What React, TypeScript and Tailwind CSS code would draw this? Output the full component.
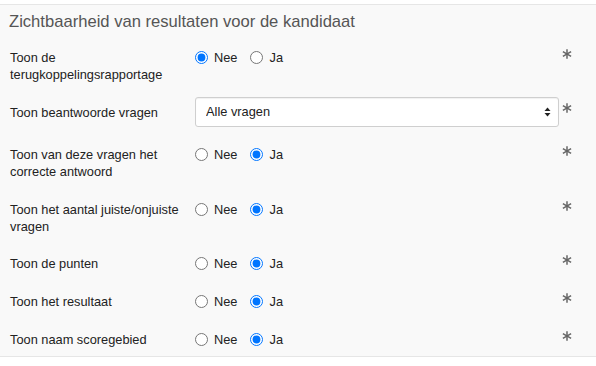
import { useState } from 'react';

type Row =
  | { kind: 'radio'; name: string; label: string; value: 'nee' | 'ja'; mt: string }
  | { kind: 'select'; name: string; label: string; mt: string };

const rows: Row[] = [
  { kind: 'radio', name: 'feedback', label: 'Toon de terugkoppelingsrapportage', value: 'nee', mt: 'mt-[17px]' },
  { kind: 'select', name: 'answered', label: 'Toon beantwoorde vragen', mt: 'mt-[14px]' },
  { kind: 'radio', name: 'correct', label: 'Toon van deze vragen het correcte antwoord', value: 'ja', mt: 'mt-[19px]' },
  { kind: 'radio', name: 'count', label: 'Toon het aantal juiste/onjuiste vragen', value: 'ja', mt: 'mt-[21px]' },
  { kind: 'radio', name: 'points', label: 'Toon de punten', value: 'ja', mt: 'mt-[20px]' },
  { kind: 'radio', name: 'result', label: 'Toon het resultaat', value: 'ja', mt: 'mt-[21px]' },
  { kind: 'radio', name: 'area', label: 'Toon naam scoregebied', value: 'ja', mt: 'mt-[21px]' },
];

function Asterisk() {
  return (
    <svg width="10" height="10" viewBox="0 0 10 10" className="block">
      <g stroke="#666" strokeWidth="1.5" strokeLinecap="butt">
        <line x1="5" y1="0.3" x2="5" y2="9.7" />
        <line x1="0.9" y1="2.6" x2="9.1" y2="7.4" />
        <line x1="0.9" y1="7.4" x2="9.1" y2="2.6" />
      </g>
    </svg>
  );
}

function RadioPair({ name, initial }: { name: string; initial: 'nee' | 'ja' }) {
  const [value, setValue] = useState(initial);
  return (
    <div className="flex items-center h-[17px]">
      <label className="flex items-center">
        <input
          type="radio"
          name={name}
          checked={value === 'nee'}
          onChange={() => setValue('nee')}
          className="m-0 w-[13px] h-[13px] accent-[#0075ff]"
        />
        <span className="ml-[6px]">Nee</span>
      </label>
      <label className="flex items-center ml-[13px]">
        <input
          type="radio"
          name={name}
          checked={value === 'ja'}
          onChange={() => setValue('ja')}
          className="m-0 w-[13px] h-[13px] accent-[#0075ff]"
        />
        <span className="ml-[6px]">Ja</span>
      </label>
    </div>
  );
}

export default function App() {
  return (
    <div className="bg-white pt-[4px] font-['Liberation_Sans',Arial,sans-serif]">
      <div className="border-y border-[#e6e6e6] bg-[#f9f9f9] pt-[7px] pb-[8px] flex flex-col">
        <h3 className="pl-[9px] text-[16.6px] leading-[20px] text-[#555] font-normal">
          Zichtbaarheid van resultaten voor de kandidaat
        </h3>

        {rows.map((row) =>
          row.kind === 'select' ? (
            <div key={row.name} className={`flex items-start ${row.mt}`}>
              <div className="w-[180px] shrink-0 ml-[10px] self-center text-[12.8px] leading-[17px] text-[#222]">
                {row.label}
              </div>
              <div className="relative ml-[5px] w-[364px]">
                <select
                  defaultValue="alle"
                  className="appearance-none w-full h-[30px] pl-[10px] pr-[24px] bg-white border border-[#cfcfcf] rounded-[3px] text-[12.8px] text-[#222] shadow-[inset_0_1px_1px_rgba(0,0,0,0.06)] outline-none"
                >
                  <option value="alle">Alle vragen</option>
                  <option value="fout">Alleen fout beantwoorde vragen</option>
                  <option value="geen">Geen vragen</option>
                </select>
                <svg
                  width="7"
                  height="10"
                  viewBox="0 0 7 10"
                  className="absolute right-[8px] top-[10px] pointer-events-none"
                >
                  <path d="M3.5 0.5 L6.5 4 L0.5 4 Z" fill="#222" />
                  <path d="M0.5 6 L6.5 6 L3.5 9.5 Z" fill="#222" />
                </svg>
              </div>
              <div className="w-[16px] flex justify-center mt-[6px]">
                <Asterisk />
              </div>
            </div>
          ) : (
            <div key={row.name} className={`flex items-start ${row.mt} text-[12.8px] leading-[17px] text-[#222]`}>
              <div className="w-[180px] shrink-0 ml-[10px]">{row.label}</div>
              <div className="ml-[5px] w-[364px]">
                <RadioPair name={row.name} initial={row.value} />
              </div>
              <div className="w-[16px] flex justify-center">
                <Asterisk />
              </div>
            </div>
          )
        )}
      </div>
    </div>
  );
}
